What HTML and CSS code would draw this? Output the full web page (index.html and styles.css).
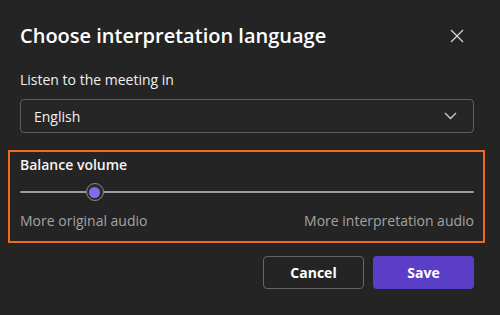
FILE: index.html
```html
<!DOCTYPE html>
<html>
<head>
<meta charset="utf-8">
<link rel="stylesheet" href="styles.css">
</head>
<body>
<div class="dialog">
  <div class="header">
    <h1 class="title">Choose interpretation language</h1>
    <button class="close" aria-label="Close">
      <svg width="14" height="14" viewBox="0 0 14 14"><path d="M1 1L13 13M13 1L1 13" stroke="#d6d6d6" stroke-width="1.3" fill="none"/></svg>
    </button>
  </div>
  <div class="label">Listen to the meeting in</div>
  <div class="select">
    <span class="select-value">English</span>
    <svg class="chev" width="13" height="8" viewBox="0 0 13 8"><path d="M1 1L6.5 6.5L12 1" stroke="#cfcfcf" stroke-width="1.3" fill="none"/></svg>
  </div>
  <div class="balance">
    <div class="balance-title">Balance volume</div>
    <div class="slider">
      <div class="track"></div>
      <div class="thumb" style="left: 16.5%"><span class="thumb-dot"></span></div>
    </div>
    <div class="ends">
      <span>More original audio</span>
      <span>More interpretation audio</span>
    </div>
  </div>
  <div class="actions">
    <button class="btn btn-secondary">Cancel</button>
    <button class="btn btn-primary">Save</button>
  </div>
</div>
</body>
</html>
```
FILE: styles.css
```css
* { box-sizing: border-box; }
html, body { margin: 0; padding: 0; }
body {
  background: #242424;
  width: 500px;
  height: 315px;
  font-family: "Open Sans", "Noto Sans", sans-serif;
  color: #ffffff;
  overflow: hidden;
}
.dialog {
  padding: 19px 26px 0 20px;
  display: flex;
  flex-direction: column;
}
.header {
  display: flex;
  align-items: center;
  justify-content: space-between;
  height: 32px;
}
.title {
  margin: 0;
  font-size: 20px;
  font-weight: 600;
  letter-spacing: 0;
  color: #ffffff;
}
.close {
  background: none;
  border: 0;
  padding: 0;
  width: 14px;
  height: 14px;
  margin-right: 10px;
  margin-top: 2px;
  display: flex;
}
.label {
  margin-top: 19px;
  font-size: 14px;
  line-height: 20px;
  color: #f0f0f0;
}
.select {
  margin-top: 9px;
  height: 34px;
  border: 1px solid #5e5e5e;
  border-radius: 4px;
  display: flex;
  align-items: center;
  justify-content: space-between;
  padding: 0 16px 0 13px;
  background: #262626;
}
.select-value {
  font-size: 14px;
  color: #f2f2f2;
}
.balance {
  margin: 17px -11px 0 -12px;
  border: 2px solid #ef6a1f;
  padding: 3px 9px 10px 10px;
}
.balance-title {
  font-size: 14px;
  font-weight: 600;
  line-height: 20px;
  color: #f5f5f5;
}
.slider {
  position: relative;
  height: 20px;
  margin-top: 7px;
}
.track {
  position: absolute;
  left: 0; right: 0;
  top: 9px;
  height: 2px;
  background: #9c9c9c;
  border-radius: 1px;
}
.thumb {
  position: absolute;
  top: 1px;
  width: 18px;
  height: 18px;
  margin-left: -9px;
  border-radius: 50%;
  background: #2a2a2a;
  border: 1px solid #8a8a8a;
  display: flex;
  align-items: center;
  justify-content: center;
}
.thumb-dot {
  width: 11px;
  height: 11px;
  border-radius: 50%;
  background: #7f6df0;
}
.ends {
  margin-top: 9px;
  display: flex;
  justify-content: space-between;
  font-size: 14px;
  line-height: 20px;
  color: #a3a3a3;
}
.actions {
  margin-top: 13px;
  display: flex;
  justify-content: flex-end;
  gap: 9px;
}
.btn {
  width: 101px;
  height: 33px;
  border-radius: 4px;
  font-family: "Open Sans", "Noto Sans", sans-serif;
  font-size: 14px;
  font-weight: 700;
  color: #ffffff;
  cursor: pointer;
}
.btn-secondary {
  background: #242424;
  border: 1px solid #666666;
}
.btn-primary {
  background: #5b3ec8;
  border: 0;
}
```
